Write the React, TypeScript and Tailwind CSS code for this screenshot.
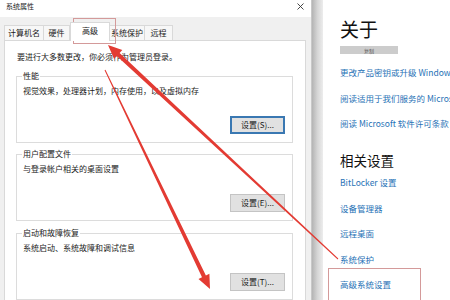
import React from 'react';

const tabs = [
  { label: '计算机名', w: 'w-[40px]', active: false },
  { label: '硬件', w: 'w-[27px]', active: false },
  { label: '高级', w: 'w-[40px]', active: true },
  { label: '系统保护', w: 'w-[36px]', active: false },
  { label: '远程', w: 'w-[29px]', active: false },
];

const groups = [
  { title: '性能', desc: '视觉效果，处理器计划，内存使用，以及虚拟内存', btn: '设置(S)...', focused: true, gap: 'mt-[9px]' },
  { title: '用户配置文件', desc: '与登录帐户相关的桌面设置', btn: '设置(E)...', focused: false, gap: 'mt-[6px]' },
  { title: '启动和故障恢复', desc: '系统启动、系统故障和调试信息', btn: '设置(T)...', focused: false, gap: 'mt-[7px]' },
];

function GroupBox({ title, desc, btn, focused, gap }: (typeof groups)[number]) {
  return (
    <fieldset className={`${gap} border border-[#dcdcdc] pr-[7px] pb-[8px]`}>
      <legend className="ml-[5px] px-[1px] text-[8px] leading-[10px] text-[#1a1a1a]">{title}</legend>
      <p className="mt-[5px] pl-[6px] text-[8px] leading-[10px] text-[#1a1a1a] whitespace-nowrap">{desc}</p>
      <div className="mt-[20px] flex justify-end">
        <button
          className={`w-[55px] h-[18px] bg-[#e1e1e1] text-[8px] leading-none text-[#1a1a1a] ${
            focused ? 'border-2 border-[#3a78b2]' : 'border border-[#c4c4c4]'
          }`}
        >
          {btn}
        </button>
      </div>
    </fieldset>
  );
}

function SystemProperties() {
  return (
    <div className="w-[312px] h-full flex flex-col bg-[#f0f0f0] border-r border-[#c8c8c8]">
      {/* title bar */}
      <div className="h-[17px] bg-white flex items-start justify-between pl-[6px] pr-[6px]">
        <span className="text-[7px] leading-[10px] pt-[1px] text-[#222]">系统属性</span>
        <svg width="7" height="7" viewBox="0 0 7 7" className="mt-[3px] mr-[1px]">
          <path d="M0.5 0.5 L6.5 6.5 M6.5 0.5 L0.5 6.5" stroke="#333" strokeWidth="0.9" />
        </svg>
      </div>

      {/* tabs */}
      <div className="h-[23px] flex items-end pl-[5px]">
        {tabs.map((t) =>
          t.active ? (
            <div
              key={t.label}
              className={`${t.w} h-[19px] -mb-px relative z-10 bg-white border border-b-0 border-[#d9d9d9] flex items-start justify-center pt-[3px] text-[8px] leading-[10px] text-[#1a1a1a]`}
            >
              {t.label}
            </div>
          ) : (
            <div
              key={t.label}
              className={`${t.w} h-[15px] bg-[#f7f7f7] border border-b-0 border-[#d9d9d9] -ml-px flex items-center justify-center text-[8px] leading-[10px] text-[#1a1a1a]`}
            >
              {t.label}
            </div>
          )
        )}
      </div>

      {/* tab page */}
      <div className="flex-1 ml-[4px] mr-[5px] bg-white border border-[#d9d9d9] border-b-0 pl-[11px] pr-[12px] pt-[11px] overflow-hidden">
        <p className="pl-[1px] text-[8px] leading-[10px] text-[#1a1a1a] whitespace-nowrap">
          要进行大多数更改，你必须作为管理员登录。
        </p>
        {groups.map((g) => (
          <GroupBox key={g.title} {...g} />
        ))}
      </div>
    </div>
  );
}

const topLinks = ['更改产品密钥或升级 Windows', '阅读适用于我们服务的 Microsoft 服务协议', '阅读 Microsoft 软件许可条款'];
const relatedLinks = ['BitLocker 设置', '设备管理器', '远程桌面', '系统保护', '高级系统设置'];

function AboutPanel() {
  return (
    <div className="flex-1 h-full bg-white pl-[17px] pt-[19px] overflow-hidden whitespace-nowrap">
      <h1 className="text-[19px] leading-[20px] text-[#111]">关于</h1>
      <div className="mt-[7px] w-[58px] h-[8px] bg-[#cccccc] flex items-center justify-center">
        <span className="text-[5px] leading-none text-[#555]">复制</span>
      </div>
      <div className="mt-[14px] flex flex-col gap-[17.5px]">
        {topLinks.map((l) => (
          <span key={l} className="text-[8.5px] leading-[8px] text-[#1f72b6]">
            {l}
          </span>
        ))}
      </div>
      <h2 className="mt-[26px] text-[13.5px] leading-[14px] text-[#111]">相关设置</h2>
      <div className="mt-[11px] flex flex-col gap-[17.5px]">
        {relatedLinks.map((l) => (
          <span key={l} className="text-[8.5px] leading-[8px] text-[#1f72b6]">
            {l}
          </span>
        ))}
      </div>
    </div>
  );
}

export default function App() {
  return (
    <div className="relative w-[450px] h-[300px] overflow-hidden flex bg-white font-['Noto_Sans_CJK_SC','Noto_Sans',sans-serif]">
      <SystemProperties />
      {/* window shadow */}
      <div className="w-[11px] h-full bg-gradient-to-r from-[#b4b4b4] via-[#d6d6d6] to-[#ededed]" />
      <AboutPanel />

      {/* annotation overlay */}
      <svg className="absolute inset-0 pointer-events-none" width="450" height="300" viewBox="0 0 450 300">
        <rect x="73.5" y="18.5" width="42" height="25" fill="none" stroke="#d49a9a" strokeWidth="1" />
        <rect x="328.5" y="268.5" width="92" height="40" fill="none" stroke="#d49a9a" strokeWidth="1" />
        <polygon
          points="108,45 122.3,50.1 119.6,53 338.3,258.6 337.7,259.4 116.8,56 114.1,58.9"
          fill="#e33b33"
        />
        <polygon
          points="210,289 209.4,273.8 205.9,275.5 105.45,69.8 104.55,70.2 202,277.35 198.5,279"
          fill="#e33b33"
        />
      </svg>
    </div>
  );
}
